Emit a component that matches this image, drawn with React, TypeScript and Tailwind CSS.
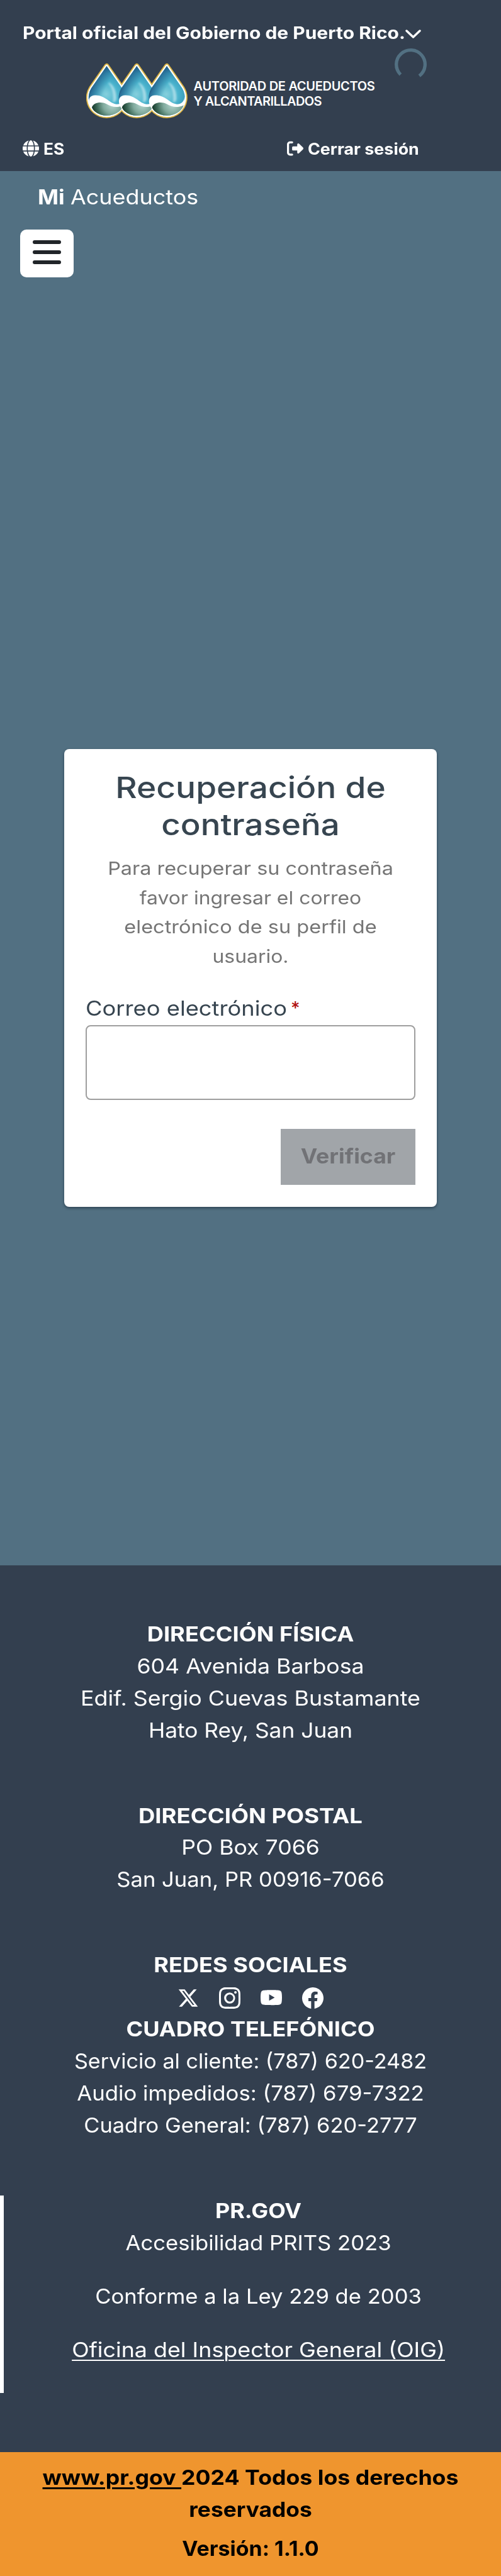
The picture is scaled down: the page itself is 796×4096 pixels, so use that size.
import type { ReactNode } from "react";
import { FaGlobe, FaRightFromBracket, FaXTwitter } from "react-icons/fa6";
import { BsFacebook, BsInstagram, BsYoutube } from "react-icons/bs";

function Line({ className, children }: { className: string; children: ReactNode }) {
  return <div className={`whitespace-nowrap ${className}`}>{children}</div>;
}

function Drop({ dx }: { dx: number }) {
  return (
    <g transform={`translate(${dx} 0)`}>
      <path d="M208 84 L104 234 A122 122 0 1 0 312 234 Z" fill="url(#water)" clipPath="url(#half)" />
      <path d="M208 84 L104 234 A122 122 0 1 0 312 234 Z" fill="url(#shade)" clipPath="url(#half)" />
      <path d="M218 200 C246 232 256 272 250 325 C262 332 270 326 274 310 C276 260 256 214 226 196 Z" fill="#fff" opacity="0.45" filter="url(#soft)" />
      <path
        d="M88 330 C86 300 98 284 128 282 C196 278 232 342 276 342 C312 342 326 316 330 290 C334 350 300 400 252 412 C180 432 100 400 88 330 Z"
        fill="#fff"
      />
      <path
        d="M108 364 C122 324 178 326 206 340 C244 360 270 370 322 350 C304 398 258 418 208 419 C160 418 120 396 108 364 Z"
        fill="url(#land)"
      />
    </g>
  );
}

function Logo() {
  const body = "M208 84 L104 234 A122 122 0 1 0 312 234 Z";
  const offsets = [0, 203, 406];
  return (
    <svg viewBox="70 64 684 372" className="h-[88px] w-[161px] shrink-0">
      <defs>
        <radialGradient id="water" gradientUnits="userSpaceOnUse" cx="205" cy="275" r="190">
          <stop offset="0" stopColor="#86cfdc" />
          <stop offset="0.4" stopColor="#4cb6cf" />
          <stop offset="0.75" stopColor="#3797b8" />
          <stop offset="1" stopColor="#23608c" />
        </radialGradient>
        <linearGradient id="shade" gradientUnits="userSpaceOnUse" x1="95" y1="190" x2="200" y2="240">
          <stop offset="0" stopColor="#102c50" stopOpacity="0.95" />
          <stop offset="0.35" stopColor="#1b4d7c" stopOpacity="0.6" />
          <stop offset="1" stopColor="#1b4d7c" stopOpacity="0" />
        </linearGradient>
        <radialGradient id="land" gradientUnits="userSpaceOnUse" cx="245" cy="345" r="135">
          <stop offset="0" stopColor="#b5d6cf" />
          <stop offset="0.45" stopColor="#7fa99c" />
          <stop offset="0.75" stopColor="#3f6b5a" />
          <stop offset="1" stopColor="#163a2c" />
        </radialGradient>
        <clipPath id="half">
          <rect x="84" y="60" width="250" height="380" />
        </clipPath>
        <filter id="soft" x="-50%" y="-20%" width="200%" height="140%">
          <feGaussianBlur stdDeviation="6" />
        </filter>
      </defs>
      <g strokeLinejoin="round">
        {offsets.map((x) => (
          <path key={x} d={body} transform={`translate(${x} 0)`} fill="#dcb545" stroke="#dcb545" strokeWidth="34" />
        ))}
        {offsets.map((x) => (
          <path key={x} d={body} transform={`translate(${x} 0)`} fill="#fff" stroke="#fff" strokeWidth="18" />
        ))}
      </g>
      {offsets.map((x) => (
        <Drop key={x} dx={x} />
      ))}
    </svg>
  );
}

function Header() {
  return (
    <header className="relative h-[271.6px] bg-[#333f4f] pt-[32px] font-bold">
      <div className="flex h-[40px] items-center pl-[36px]">
        <Line className="w-[608px] origin-left scale-x-[1.131] text-[26.5px] leading-[40px]">Portal oficial del Gobierno de Puerto Rico.</Line>
        <svg viewBox="0 0 25 14" className="mt-[3px] h-[14px] w-[25px] shrink-0" fill="none" stroke="#fff" strokeWidth="3.4" strokeLinecap="round" strokeLinejoin="round">
          <path d="M2 2 L12.5 12 L23 2" />
        </svg>
      </div>
      <svg viewBox="0 0 51 51" className="absolute top-[77.3px] left-[627.2px] size-[51px]" fill="none" stroke="#527082" strokeWidth="5.3">
        <path d="M9.4 41.6 A22.8 22.8 0 1 1 39.2 43.7" />
      </svg>
      <div className="mt-[28px] flex pl-[136.8px]">
        <Logo />
        <div className="mt-[24.6px] ml-[9.8px] text-[20px] leading-[24.8px] font-semibold">
          <Line className="tracking-[-0.3px]">AUTORIDAD DE ACUEDUCTOS</Line>
          <Line className="tracking-[-0.57px]">Y ALCANTARILLADOS</Line>
        </div>
      </div>
      <div className="mt-[29px] flex h-[40px] items-start pr-[131px] pl-[36px] text-[25px] leading-[40px]">
        <FaGlobe className="mt-[5.5px] size-[26px]" />
        <Line className="ml-[7px] origin-left scale-x-[1.053]">ES</Line>
        <div className="ml-auto flex">
          <FaRightFromBracket className="mt-[5.5px] size-[26px]" />
          <Line className="ml-[7px] w-[176px] origin-left scale-x-[1.073]">Cerrar sesión</Line>
        </div>
      </div>
    </header>
  );
}

function Card() {
  return (
    <div className="ml-[102px] h-[728px] w-[592px] rounded-[8px] bg-white px-[34px] pt-[31.2px] text-[#374550] shadow-[0_2px_4px_rgba(20,35,50,0.6)]">
      <h1 className="text-center text-[47px] leading-[59.7px] font-medium">
        <Line className="scale-x-[1.133]">Recuperación de</Line>
        <Line className="scale-x-[1.123]">contraseña</Line>
      </h1>
      <div className="mt-[16.8px] text-center text-[29px] leading-[46.7px] text-[#757575]">
        <Line className="scale-x-[1.117]">Para recuperar su contraseña</Line>
        <Line className="scale-x-[1.1]">favor ingresar el correo</Line>
        <Line className="scale-x-[1.121]">electrónico de su perfil de</Line>
        <Line className="scale-x-[1.1]">usuario.</Line>
      </div>
      <label className="mt-[37.8px] flex text-[33px] leading-[40px] whitespace-nowrap">
        <span className="w-[326px] origin-left scale-x-[1.1]">Correo electrónico</span>
        <span className="text-[28px] font-medium text-[#b01010]">*</span>
      </label>
      <input className="mt-[7.3px] block h-[119px] w-[524px] rounded-[8px] border-2 border-[#9e9e9e] bg-white" />
      <button className="mt-[46.5px] ml-auto block h-[89px] w-[214px] bg-[#a1a5a9] pb-[3px] text-[33px] font-bold text-[#717276]">
        <Line className="scale-x-[1.079]">Verificar</Line>
      </button>
    </div>
  );
}

function Footer() {
  return (
    <footer className="h-[1409.2px] bg-[#333f4f] pt-[83.5px] text-center text-[33px] leading-[50.93px]">
      <section>
        <Line className="scale-x-[1.099] font-bold">DIRECCIÓN FÍSICA</Line>
        <Line className="scale-x-[1.081]">604 Avenida Barbosa</Line>
        <Line className="scale-x-[1.086]">Edif. Sergio Cuevas Bustamante</Line>
        <Line className="scale-x-[1.071]">Hato Rey, San Juan</Line>
      </section>
      <section className="mt-[84.9px]">
        <Line className="scale-x-[1.105] font-bold">DIRECCIÓN POSTAL</Line>
        <Line className="scale-x-[1.08]">PO Box 7066</Line>
        <Line className="scale-x-[1.049]">San Juan, PR 00916-7066</Line>
      </section>
      <section className="mt-[84.9px]">
        <Line className="scale-x-[1.095] font-bold">REDES SOCIALES</Line>
        <div className="flex h-[50.93px] items-start justify-center gap-[31.8px] pt-[10px]">
          <FaXTwitter className="size-[34px]" />
          <BsInstagram className="size-[34px]" />
          <BsYoutube className="size-[34px]" />
          <BsFacebook className="size-[34px]" />
        </div>
        <Line className="scale-x-[1.094] font-bold">CUADRO TELEFÓNICO</Line>
        <Line className="scale-x-[1.035]">Servicio al cliente: (787) 620-2482</Line>
        <Line className="scale-x-[1.054]">Audio impedidos: (787) 679-7322</Line>
        <Line className="scale-x-[1.044]">Cuadro General: (787) 620-2777</Line>
      </section>
      <section className="mt-[86.3px] flex h-[314px] flex-col border-l-[6.5px] border-white pl-[18.8px]">
        <Line className="-mt-[1px] scale-x-[1.087] font-bold">PR.GOV</Line>
        <Line className="scale-x-[1.05]">Accesibilidad PRITS 2023</Line>
        <Line className="mt-[34px] scale-x-[1.049]">Conforme a la Ley 229 de 2003</Line>
        <Line className="mt-[34px] scale-x-[1.086]">
          <a className="underline decoration-2 underline-offset-[4px]">Oficina del Inspector General (OIG)</a>
        </Line>
      </section>
    </footer>
  );
}

export default function App() {
  return (
    <div className="h-[4096px] w-[796px] overflow-hidden bg-[#527082] font-['Inter',sans-serif] text-white">
      <Header />
      <main className="h-[2217.8px] pt-[16px]">
        <div className="flex pl-[60px] text-[33px] leading-[50px]">
          <Line className="w-[51.5px] origin-left scale-x-[1.075] font-bold">Mi</Line>
          <Line className="origin-left scale-x-[1.089]">Acueductos</Line>
        </div>
        <button className="mt-[27.4px] ml-[31.8px] flex h-[76.4px] w-[85px] flex-col items-center gap-[9.6px] rounded-[10px] bg-white pt-[17px]">
          <span className="h-[6.4px] w-[44.6px] rounded-full bg-[#212529]" />
          <span className="h-[6.4px] w-[44.6px] rounded-full bg-[#212529]" />
          <span className="h-[6.4px] w-[44.6px] rounded-full bg-[#212529]" />
        </button>
        <div className="mt-[749.2px]">
          <Card />
        </div>
      </main>
      <Footer />
      <div className="h-[197.4px] bg-[#ef952e] pt-[15.4px] text-center text-[33px] leading-[50.93px] font-bold text-black">
        <Line className="scale-x-[1.081]">
          <a className="whitespace-pre underline decoration-[3px] underline-offset-[4px]">{"www.pr.gov "}</a>
          2024 Todos los derechos
        </Line>
        <Line className="scale-x-[1.07]">reservados</Line>
        <Line className="mt-[10.8px] scale-x-[1.028]">Versión: 1.1.0</Line>
      </div>
    </div>
  );
}
